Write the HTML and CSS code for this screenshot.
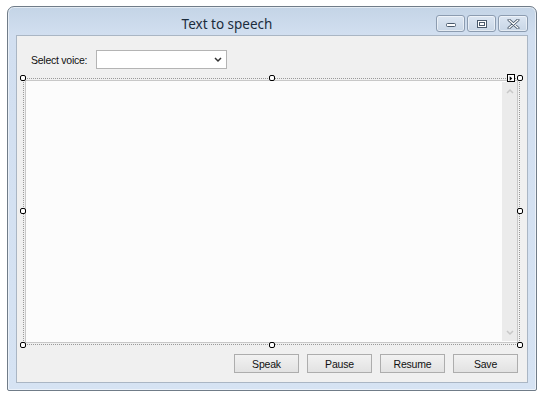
FILE: index.html
```html
<!DOCTYPE html>
<html>
<head>
<meta charset="utf-8">
<link rel="stylesheet" href="styles.css">
</head>
<body>
<div class="window">
  <div class="titlebar">
    <div class="title">Text to speech</div>
    <div class="caption-buttons">
      <div class="cap-btn"><svg width="12" height="8" viewBox="0 0 12 8"><rect x="1.5" y="3.5" width="9" height="3" rx="1" fill="#fff" stroke="#4a5a6c"/></svg></div>
      <div class="cap-btn"><svg width="12" height="10" viewBox="0 0 12 10"><rect x="1.5" y="1.5" width="9" height="7" fill="#fff" stroke="#4a5a6c"/><rect x="3.5" y="3.5" width="5" height="3" fill="none" stroke="#4a5a6c"/></svg></div>
      <div class="cap-btn close"><svg width="13" height="10" viewBox="0 0 13 10"><path d="M2 1 L11 9 M11 1 L2 9" stroke="#4a5a6c" stroke-width="3" stroke-linecap="round"/><path d="M2 1 L11 9 M11 1 L2 9" stroke="#fff" stroke-width="1.2" stroke-linecap="round"/></svg></div>
    </div>
  </div>
  <div class="client">
    <div class="voice-row">
      <span class="label">Select voice:</span>
      <div class="combo"><svg width="8" height="6" viewBox="0 0 8 6"><path d="M1 1 L4 4 L7 1" fill="none" stroke="#333" stroke-width="1.5"/></svg></div>
    </div>
    <div class="designer">
      <div class="textbox">
        <div class="scrollbar">
          <svg width="8" height="6" viewBox="0 0 8 6"><path d="M1 5 L4 2 L7 5" fill="none" stroke="#c8c8c8" stroke-width="1.5"/></svg>
          <svg width="8" height="6" viewBox="0 0 8 6"><path d="M1 1 L4 4 L7 1" fill="none" stroke="#c8c8c8" stroke-width="1.5"/></svg>
        </div>
      </div>
      <span class="handle h-tl"></span>
      <span class="handle h-tm"></span>
      <span class="handle h-tr"></span>
      <span class="handle h-ml"></span>
      <span class="handle h-mr"></span>
      <span class="handle h-bl"></span>
      <span class="handle h-bm"></span>
      <span class="handle h-br"></span>
      <span class="smarttag"><svg width="7" height="7" viewBox="0 0 7 7"><path d="M2 1 L5 3.5 L2 6 Z" fill="#000"/></svg></span>
    </div>
    <div class="button-row">
      <div class="btn">Speak</div>
      <div class="btn">Pause</div>
      <div class="btn">Resume</div>
      <div class="btn">Save</div>
    </div>
  </div>
</div>
</body>
</html>
```
FILE: styles.css
```css
html, body {
  margin: 0;
  padding: 0;
  background: #ffffff;
}
body {
  padding: 6px 0 0 7px;
  width: 544px;
  height: 397px;
  box-sizing: border-box;
  overflow: hidden;
}
.window {
  width: 530px;
  height: 385px;
  box-sizing: border-box;
  border: 1px solid #707c88;
  border-radius: 7px 7px 2px 2px;
  background: linear-gradient(to bottom, #c4d4e6 0px, #d2dff0 28px, #d6e3f3 100%);
  padding: 0 8px 7px 8px;
  display: flex;
  flex-direction: column;
  box-shadow: inset 0 0 0 1px rgba(255,255,255,0.55);
}
.titlebar {
  height: 28px;
  flex: none;
  position: relative;
  display: flex;
  align-items: center;
  justify-content: center;
}
.title {
  font-family: "Noto Sans", "Open Sans", sans-serif;
  font-size: 13.5px;
  color: #1c2c3c;
  margin-left: -90px;
  margin-top: 6px;
}
.caption-buttons {
  position: absolute;
  right: 0;
  top: 8px;
  display: flex;
  gap: 2px;
}
.cap-btn {
  width: 29px;
  height: 17px;
  box-sizing: border-box;
  border: 1px solid #8c9cb0;
  border-radius: 3px;
  background: linear-gradient(to bottom, #dce6f2, #c8d6e6);
  display: flex;
  align-items: center;
  justify-content: center;
  box-shadow: inset 0 0 0 1px rgba(255,255,255,0.5);
}
.cap-btn.close {
  width: 30px;
}
.client {
  flex: 1;
  background: #f0f0f0;
  border: 1px solid #aab6c4;
  display: flex;
  flex-direction: column;
  position: relative;
}
.voice-row {
  display: flex;
  align-items: center;
  padding: 14px 0 0 14px;
  height: 19px;
}
.label {
  font-family: "Liberation Sans", Arial, sans-serif;
  font-size: 10.5px;
  letter-spacing: -0.25px;
  color: #111;
  width: 65px;
}
.combo {
  width: 131px;
  height: 19px;
  box-sizing: border-box;
  border: 1px solid #b4b4b4;
  background: #fff;
  display: flex;
  align-items: center;
  justify-content: flex-end;
  padding-right: 4px;
}
.designer {
  position: relative;
  margin: 9px 0 0 6px;
  width: 497px;
  height: 267px;
  box-sizing: border-box;
  border: 1px dotted #9a9a9a;
  flex: none;
}
.textbox {
  position: absolute;
  inset: 1px;
  border: 1px solid #c8c8c8;
  background: #fcfcfc;
  display: flex;
  justify-content: flex-end;
}
.scrollbar {
  width: 15px;
  margin: 1px 0;
  background: #ebebeb;
  display: flex;
  flex-direction: column;
  justify-content: space-between;
  align-items: center;
  padding: 6px 0 5px;
}
.handle {
  position: absolute;
  width: 6px;
  height: 6px;
  box-sizing: border-box;
  border: 1px solid #000;
  border-radius: 2px;
  background: #fff;
  margin: -3px 0 0 -3px;
}
.h-tl { left: -1px; top: -1px; }
.h-tm { left: 248px; top: -1px; }
.h-tr { left: 496px; top: -1px; }
.h-ml { left: -1px; top: 132px; }
.h-mr { left: 496px; top: 132px; }
.h-bl { left: -1px; top: 266px; }
.h-bm { left: 248px; top: 266px; }
.h-br { left: 496px; top: 266px; }
.smarttag {
  position: absolute;
  left: 483px;
  top: -5px;
  width: 8px;
  height: 8px;
  box-sizing: border-box;
  border: 1px solid #000;
  background: #fff;
  display: flex;
  align-items: center;
  justify-content: center;
}
.button-row {
  display: flex;
  justify-content: flex-end;
  gap: 8px;
  padding: 9px 9px 0 0;
}
.btn {
  width: 65px;
  height: 19px;
  box-sizing: border-box;
  border: 1px solid #adadad;
  background: linear-gradient(to bottom, #f2f2f2, #e2e2e2);
  font-family: "Liberation Sans", Arial, sans-serif;
  font-size: 10.5px;
  letter-spacing: -0.2px;
  color: #111;
  display: flex;
  align-items: center;
  justify-content: center;
}
```
